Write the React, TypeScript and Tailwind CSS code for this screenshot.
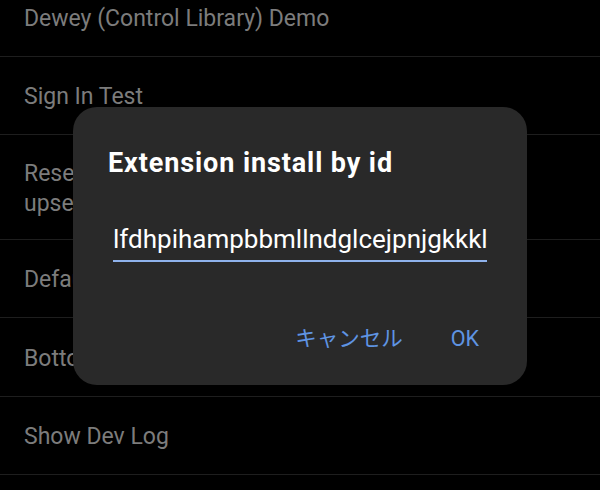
import React from "react";

const rows: { label: string[]; h: string }[] = [
  { label: ["Dewey (Control Library) Demo"], h: "h-[78px]" },
  { label: ["Sign In Test"], h: "h-[78px]" },
  { label: ["Reset Rewards onboarding", "upsell"], h: "h-[105px]" },
  { label: ["Default Browser Prompt"], h: "h-[78px]" },
  { label: ["Bottom Bar Settings"], h: "h-[79px]" },
  { label: ["Show Dev Log"], h: "h-[78px]" },
  { label: ["Crash Test"], h: "h-[78px]" },
];

const App = () => {
  return (
    <div
      className="relative w-[600px] h-[490px] overflow-hidden bg-black"
      style={{ fontFamily: "Roboto, 'Noto Sans CJK JP', sans-serif" }}
    >
      {/* settings list (dimmed behind the dialog) */}
      <div className="-mt-[21px] flex flex-col">
        {rows.map((row, i) => (
          <div
            key={i}
            className={`flex flex-col justify-center px-6 pt-[3px] border-b border-[#1e1e1e] text-[23px] leading-[30px] text-[#7c7c7c] whitespace-nowrap ${row.h}`}
          >
            {row.label.map((l) => (
              <span key={l}>{l}</span>
            ))}
          </div>
        ))}
      </div>

      {/* dialog */}
      <div className="absolute left-[73px] top-[107px] w-[454px] h-[278px] rounded-[24px] bg-[#292929] flex flex-col pt-[40px]">
        <div className="pl-[35px] text-[27px] leading-[32px] font-bold tracking-[0.9px] text-white">
          Extension install by id
        </div>
        <div className="mx-[40px] mt-[45px] border-b-2 border-[#8fb2ec] pb-[6px] text-[26px] leading-[30px] text-white whitespace-nowrap">
          lfdhpihampbbmllndglcejpnjgkkkl
        </div>
        <div className="mt-[63px] flex justify-end gap-[48px] pr-[48px] text-[21.5px] leading-[28px] text-[#5f94e3]">
          <button>キャンセル</button>
          <button>OK</button>
        </div>
      </div>
    </div>
  );
};

export default App;
